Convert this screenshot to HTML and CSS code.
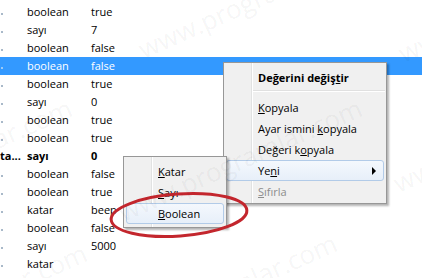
FILE: index.html
```html
<!DOCTYPE html>
<html>
<head>
<meta charset="utf-8">
<link rel="stylesheet" href="styles.css">
</head>
<body>
<div class="screen">
  <div class="list">
    <div class="row"><span class="name"><i class="dot"></i></span><span>boolean</span><span>true</span></div>
    <div class="row"><span class="name"><i class="dot"></i></span><span>sayı</span><span>7</span></div>
    <div class="row"><span class="name"><i class="dot"></i></span><span>boolean</span><span>false</span></div>
    <div class="row selected"><span class="name"><i class="dot"></i></span><span>boolean</span><span>false</span></div>
    <div class="row"><span class="name"><i class="dot"></i></span><span>boolean</span><span>true</span></div>
    <div class="row"><span class="name"><i class="dot"></i></span><span>sayı</span><span>0</span></div>
    <div class="row"><span class="name"><i class="dot"></i></span><span>boolean</span><span>true</span></div>
    <div class="row"><span class="name"><i class="dot"></i></span><span>boolean</span><span>true</span></div>
    <div class="row bold"><span class="name">ta...</span><span>sayı</span><span>0</span></div>
    <div class="row"><span class="name"><i class="dot"></i></span><span>boolean</span><span>false</span></div>
    <div class="row"><span class="name"><i class="dot"></i></span><span>boolean</span><span>true</span></div>
    <div class="row"><span class="name"><i class="dot"></i></span><span>katar</span><span>beep</span></div>
    <div class="row"><span class="name"><i class="dot"></i></span><span>boolean</span><span>false</span></div>
    <div class="row"><span class="name"><i class="dot"></i></span><span>sayı</span><span>5000</span></div>
    <div class="row"><span class="name"><i class="dot"></i></span><span>katar</span><span></span></div>
    <div class="row"><span class="name"><i class="dot"></i></span><span>boolean</span><span>true</span></div>
  </div>

  <div class="menu main-menu">
    <div class="item strong"><span class="label">Değerini değiş<u>t</u>ir</span></div>
    <div class="sep"></div>
    <div class="item"><span class="label"><u>K</u>opyala</span></div>
    <div class="item"><span class="label">Ayar ismini <u>k</u>opyala</span></div>
    <div class="item"><span class="label">Değeri k<u>o</u>pyala</span></div>
    <div class="item hover"><span class="label">Ye<u>n</u>i</span><span class="arrow"></span></div>
    <div class="item disabled"><span class="label"><u>S</u>ıfırla</span></div>
  </div>

  <div class="menu sub-menu">
    <div class="item"><span class="label"><u>K</u>atar</span></div>
    <div class="item"><span class="label"><u>S</u>ayı</span></div>
    <div class="item hover"><span class="label"><u>B</u>oolean</span></div>
  </div>

  <svg class="circle" width="422" height="278" viewBox="0 0 422 278">
    <ellipse cx="179" cy="215" rx="68" ry="21" transform="rotate(-4 179 215)" fill="none" stroke="#c3262d" stroke-width="3"/>
  </svg>

  <div class="watermark">
    <span class="wm w1">www.programlar.com</span>
    <span class="wm w2">www.programlar.com</span>
    <span class="wm w3">www.programlar.com</span>
    <span class="wm w4">www.programlar.com</span>
    <span class="wm w5">www.programlar.com</span>
    <span class="wm w6">www.programlar.com</span>
    <span class="wm w7">www.programlar.com</span>
  </div>
</div>
</body>
</html>
```

FILE: styles.css
```css
* { box-sizing: border-box; }
html, body { margin: 0; padding: 0; background: #fff; }
body {
  font-family: "Open Sans", "Noto Sans", sans-serif;
  font-size: 11px;
  color: #000;
}
.screen {
  position: relative;
  width: 422px;
  height: 278px;
  overflow: hidden;
}
.list {
  display: flex;
  flex-direction: column;
  padding-top: 3px;
}
.row {
  display: grid;
  grid-template-columns: 27px 64px 1fr;
  height: 18px;
  line-height: 18px;
  white-space: nowrap;
}
.row.selected { background: #3399ff; color: #fff; }
.row.bold { font-weight: bold; }
.name { overflow: hidden; display: flex; align-items: center; }
.row.bold .name { display: block; }
.dot {
  display: block;
  width: 2px;
  height: 2px;
  margin-left: 1px;
  margin-top: 3px;
  background: #a9b9c9;
}
.row.selected .dot { background: #9cc9f5; }

.menu {
  position: absolute;
  background:
    linear-gradient(to right, transparent 27px, #e1e2e2 27px, #e1e2e2 28px, #ffffff 28px, #ffffff 29px, transparent 29px),
    #f0f0f0;
  border: 1px solid #979797;
  box-shadow: 2px 2px 2px rgba(0, 0, 0, 0.3);
}
.main-menu {
  left: 223px;
  top: 62px;
  width: 164px;
  height: 142px;
  padding: 3px 0 1px;
}
.sub-menu {
  left: 123px;
  top: 156px;
  width: 104px;
  height: 72px;
  padding: 4px 0 3px;
}
.item {
  display: flex;
  align-items: center;
  height: 21px;
  margin: 0 2px;
  padding-left: 31px;
  padding-right: 7px;
  border: 1px solid transparent;
  border-radius: 3px;
  white-space: nowrap;
}
.label { white-space: pre; }
.main-menu .item.strong { height: 22px; font-weight: bold; }
.item.disabled { color: #8d8d8d; }
.item.hover {
  border-color: #b2cbe8;
  background: linear-gradient(#f4f8fd, #e7eff9);
}
.sep {
  height: 9px;
  margin-left: 29px;
  margin-right: 1px;
  background: linear-gradient(to bottom, transparent 2px, #e0e0e0 2px, #e0e0e0 3px, #ffffff 3px, #ffffff 4px, transparent 4px);
}
.arrow {
  margin-left: auto;
  width: 0;
  height: 0;
  border-left: 4px solid #000;
  border-top: 4px solid transparent;
  border-bottom: 4px solid transparent;
}
u { text-decoration: underline; text-underline-offset: 1px; }

.circle {
  position: absolute;
  left: 0;
  top: 0;
  pointer-events: none;
}

.watermark {
  position: absolute;
  inset: 0;
  pointer-events: none;
}
.wm {
  position: absolute;
  font-family: "Open Sans", sans-serif;
  font-size: 26px;
  line-height: 26px;
  color: rgba(0, 0, 0, 0.05);
  white-space: nowrap;
  transform-origin: 0 100%;
  transform: rotate(-24deg);
}
.w1 { left: -165px; top: 199px; }
.w2 { left: 125px; top: 199px; }
.w3 { left: 145px; top: 36px; }
.w4 { left: 405px; top: 40px; }
.w5 { left: -150px; top: 344px; }
.w6 { left: 100px; top: 334px; }
.w7 { left: 400px; top: 170px; }
```
